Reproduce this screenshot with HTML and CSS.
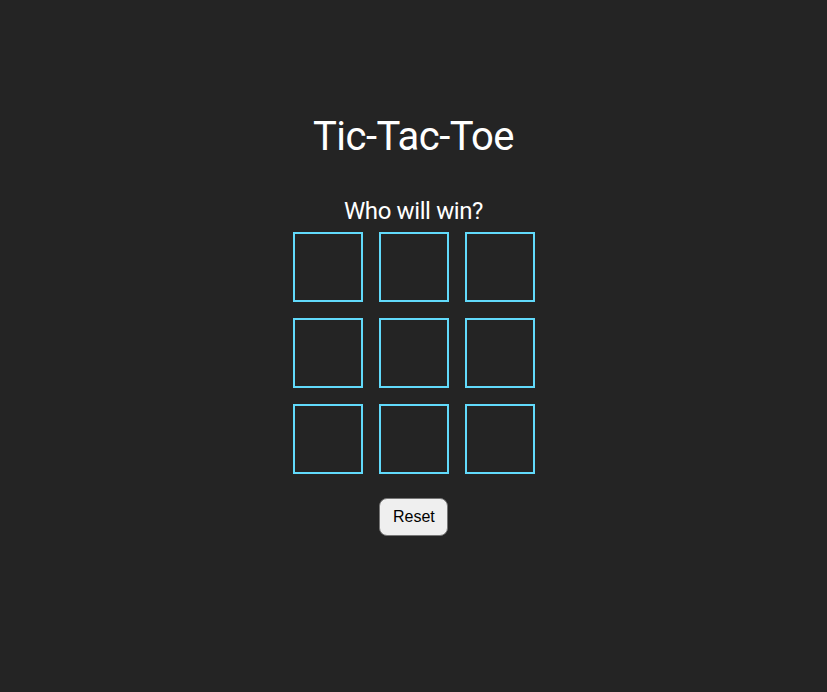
FILE: index.html
```html
<!DOCTYPE html>
<html>
<head>
<meta charset="utf-8">
<link rel="stylesheet" href="styles.css">
</head>
<body>
<div class="app">
  <h1 class="title">Tic-Tac-Toe</h1>
  <h2 class="status">Who will win?</h2>
  <div class="board">
    <div class="cell"></div><div class="cell"></div><div class="cell"></div>
    <div class="cell"></div><div class="cell"></div><div class="cell"></div>
    <div class="cell"></div><div class="cell"></div><div class="cell"></div>
  </div>
  <button class="reset">Reset</button>
</div>
</body>
</html>
```
FILE: styles.css
```css
html, body {
  margin: 0;
  padding: 0;
  background: #242424;
  height: 100%;
}
body {
  font-family: Roboto, Inter, sans-serif;
  color: #ffffff;
}
.app {
  display: flex;
  flex-direction: column;
  align-items: center;
  padding-top: 113px;
}
.title {
  font-size: 40px;
  font-weight: 400;
  line-height: 48px;
  letter-spacing: -0.55px;
  margin: 0;
}
.status {
  font-size: 24px;
  font-weight: 400;
  line-height: 30px;
  letter-spacing: -0.38px;
  margin: 35px 0 0;
}
.board {
  display: grid;
  grid-template-columns: repeat(3, 70px);
  grid-auto-rows: 70px;
  gap: 16px;
  margin-top: 6px;
}
.cell {
  box-sizing: border-box;
  border: 2px solid #61dafb;
}
.reset {
  margin-top: 24px;
  font-family: "Liberation Sans", Arial, sans-serif;
  font-size: 16px;
  color: #000;
  background: #efefef;
  border: 1px solid #767676;
  border-radius: 8px;
  padding: 9px 13px;
  height: 38px;
  width: 69px;
}
```
